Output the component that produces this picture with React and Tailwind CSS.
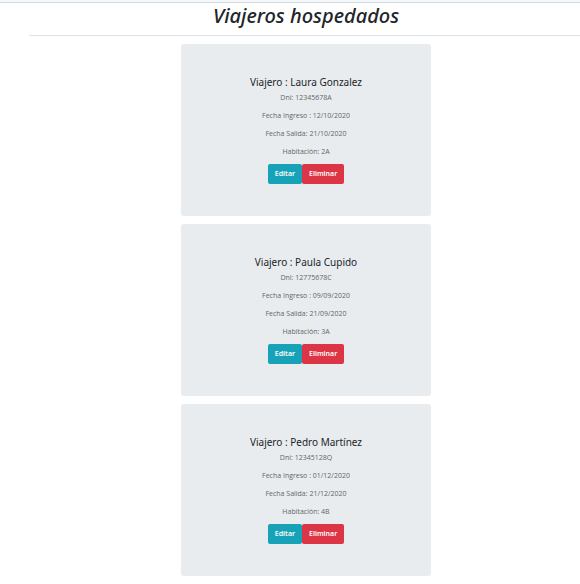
const guests = [
  { name: "Laura Gonzalez", dni: "12345678A", checkIn: "12/10/2020", checkOut: "21/10/2020", room: "2A" },
  { name: "Paula Cupido", dni: "12775678C", checkIn: "09/09/2020", checkOut: "21/09/2020", room: "3A" },
  { name: "Pedro Martínez", dni: "12345128Q", checkIn: "01/12/2020", checkOut: "21/12/2020", room: "4B" },
];

function GuestCard({ guest }) {
  return (
    <article className="flex w-full max-w-[250px] flex-col items-center rounded-[3px] bg-[#e9ecef] pb-8 pt-[31px] text-[7px] leading-[10px] text-[#636668]">
      <h2 className="text-[10px] font-normal leading-[14px] text-[#212529]">Viajero : {guest.name}</h2>
      <div className="mb-[7px] mt-1 flex flex-col items-center gap-2 font-['Open_Sans','Noto_Sans',sans-serif]">
        <p>Dni: {guest.dni}</p>
        <p>Fecha Ingreso : {guest.checkIn}</p>
        <p>Fecha Salida: {guest.checkOut}</p>
        <p>Habitación: {guest.room}</p>
      </div>
      <div className="flex text-white">
        <button type="button" className="h-5 rounded-[2px] bg-[#17a2b8] px-[7px] font-semibold">Editar</button>
        <button type="button" className="h-5 rounded-[2px] bg-[#dc3545] px-[7px] font-semibold">Eliminar</button>
      </div>
    </article>
  );
}

export default function App() {
  return (
    <div className="min-h-screen bg-white font-['Noto_Sans',sans-serif]">
      <header className="h-[3px] border-b border-[#d3dae1] bg-[#f5f8fb]" />
      <main className="pl-[29px]">
        <h1 className="border-b border-[#dee2e6] pb-[6px] pl-[3px] text-center text-[20px] font-medium italic leading-[26px] text-[#212529]">
          Viajeros hospedados
        </h1>
        <section className="flex flex-col items-center gap-2 pb-2 pl-[3px] pt-2">
          {guests.map((guest) => (
            <GuestCard key={guest.dni} guest={guest} />
          ))}
        </section>
      </main>
    </div>
  );
}
